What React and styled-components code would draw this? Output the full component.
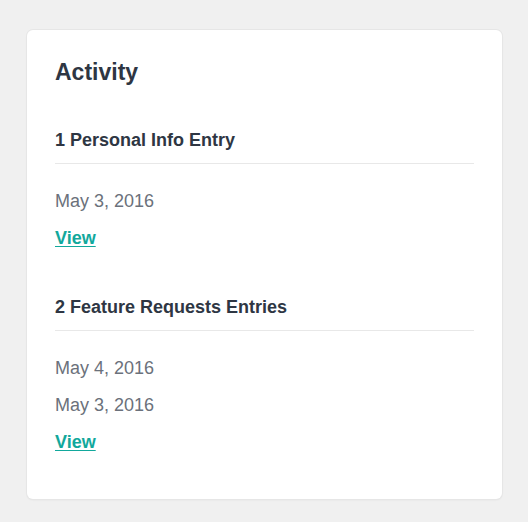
import React from "react"
import styled, { createGlobalStyle } from "styled-components"

const GlobalStyle = createGlobalStyle`
  html, body {
    margin: 0;
    padding: 0;
    background: #f0f0f0;
  }
  body {
    font-family: "Liberation Sans", Arial, sans-serif;
    -webkit-font-smoothing: antialiased;
  }
`

const Page = styled.div`
  padding: 30px 26px 20px 27px;
`

const Card = styled.div`
  background: #fff;
  border-radius: 6px;
  box-shadow: 0 0 0 1px #e6e6e6, 0 1px 2px rgba(0, 0, 0, 0.08);
  padding: 29px 28px 38px;
`

const Title = styled.h2`
  margin: 0 0 43px;
  font-size: 23px;
  line-height: 26px;
  font-weight: 700;
  color: #2e3643;
`

const Section = styled.section`
  margin-bottom: 38px;
  &:last-child {
    margin-bottom: 0;
  }
`

const SectionHeading = styled.h3`
  margin: 0;
  padding-bottom: 11px;
  border-bottom: 1px solid #e8e8e8;
  font-size: 18px;
  line-height: 24px;
  font-weight: 700;
  color: #2e3643;
`

const EntryList = styled.ul`
  list-style: none;
  margin: 0;
  padding: 19px 0 0;
`

const Entry = styled.li`
  font-size: 18px;
  line-height: 37px;
  height: 37px;
  color: #6b717b;
`

const ViewLink = styled.a`
  font-weight: 700;
  color: #12a89c;
  text-decoration: underline;
  text-underline-offset: 2px;
  cursor: pointer;
`

const activity = [
  { title: "1 Personal Info Entry", dates: ["May 3, 2016"] },
  { title: "2 Feature Requests Entries", dates: ["May 4, 2016", "May 3, 2016"] },
]

const App = () => {
  return (
    <Page>
      <GlobalStyle />
      <Card>
        <Title>Activity</Title>
        {activity.map(group => (
          <Section key={group.title}>
            <SectionHeading>{group.title}</SectionHeading>
            <EntryList>
              {group.dates.map(d => (
                <Entry key={d}>{d}</Entry>
              ))}
              <Entry>
                <ViewLink href="#">View</ViewLink>
              </Entry>
            </EntryList>
          </Section>
        ))}
      </Card>
    </Page>
  )
}

export default App
